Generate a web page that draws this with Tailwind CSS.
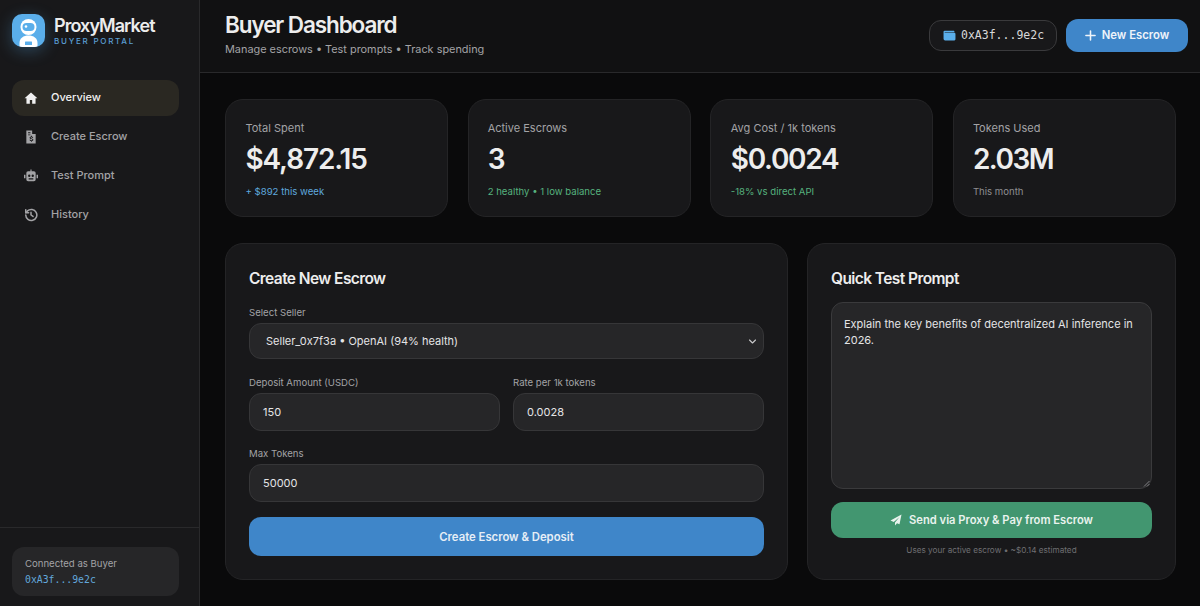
<!DOCTYPE html>
<html lang="en">
<head>
  <meta charset="UTF-8" />
  <title>ProxyMarket Buyer Dashboard</title>
  <script src="https://cdn.jsdelivr.net/npm/@tailwindcss/browser@4"></script>
</head>
<body class="bg-[#0a0a0b] text-[#f0f0f0] font-['Inter',sans-serif] overflow-hidden">
<div class="flex h-[606px] w-[1200px]">
  <!-- Sidebar -->
  <aside class="w-[200px] shrink-0 bg-[#18181a] border-r border-[#29292b] flex flex-col">
    <div class="flex gap-[9px] pl-[12px] pt-[14px] h-[80px]">
      <div class="w-[33px] h-[33px] rounded-[10px] bg-[#5aaeea] shadow-[0_4px_16px_rgba(90,174,234,0.3)] flex items-end justify-center shrink-0 overflow-hidden">
        <svg width="25" height="29" viewBox="0 0 25 29">
          <circle cx="12.5" cy="9" r="8" fill="#fff"/>
          <rect x="6.500" y="5" width="12" height="8" rx="4" fill="#5aaeea"/>
          <circle cx="10" cy="8.500" r="1.300" fill="#fff"/>
          <path d="M3.500 29v-4c0-5 4-7.500 9-7.500s9 2.500 9 7.500v4z" fill="#fff"/>
          <rect x="9" y="23.500" width="7" height="3.500" rx="0.500" fill="#5aaeea"/>
        </svg>
      </div>
      <div class="pt-[1px]">
        <div class="text-[18px] leading-[21px] font-semibold tracking-[-0.95px] text-[#ececec]">ProxyMarket</div>
        <div class="mt-[1px] text-[8px] leading-[9px] font-medium tracking-[1.75px] text-[#5b9fd4]">BUYER PORTAL</div>
      </div>
    </div>
    <nav class="pl-[12px] pr-[20px] flex flex-col gap-[3px] text-[11px] font-medium text-[#a3a3a6]">
      <a class="flex items-center gap-[13px] h-[36px] px-[12px] rounded-[12px] bg-[#2a2822] text-[#f0f0f0] pb-[1px]">
        <svg class="w-[14px] h-[14px]" viewBox="0 0 24 24" fill="currentColor"><path d="M12 2.500 1 12.500h3.200V22h5.800v-6.500h4V22h5.800v-9.500H23z"/></svg>
        Overview
      </a>
      <a class="flex items-center gap-[13px] h-[36px] px-[12px] rounded-[12px] pb-[1px]">
        <svg class="w-[14px] h-[14px]" viewBox="0 0 24 24" fill="currentColor"><path fill-rule="evenodd" d="M4 1h10l6 6v16H4zM14 1v6h6zM7 4h4v1.500H7zM7 7.500h4V9H7zM12 10h1.500v1.200c1.300.2 2.200.9 2.400 2l-1.500.3c-.1-.6-.7-.9-1.600-.9-1 0-1.500.3-1.500.8s.5.700 1.700 1c1.800.4 3 1 3 2.400 0 1.200-1 2-2.500 2.200V20H12v-1.100c-1.400-.2-2.400-1-2.600-2.200l1.500-.3c.2.700.8 1.100 1.800 1.100s1.600-.3 1.600-.9c0-.5-.5-.8-1.800-1.100-1.700-.4-2.900-1-2.900-2.300 0-1.100.9-1.900 2.400-2.100z"/></svg>
        Create Escrow
      </a>
      <a class="flex items-center gap-[13px] h-[36px] px-[12px] rounded-[12px] pb-[1px]">
        <svg class="w-[14px] h-[14px]" viewBox="0 0 24 24" fill="currentColor"><path fill-rule="evenodd" d="M11 1h2v3h4a3 3 0 0 1 3 3v11a3 3 0 0 1-3 3H7a3 3 0 0 1-3-3V7a3 3 0 0 1 3-3h4zM9 9.500a2 2 0 1 0 0 4 2 2 0 0 0 0-4zm6 0a2 2 0 1 0 0 4 2 2 0 0 0 0-4zM8 16v2h8v-2zM0 10h2.500v6H0zM21.500 10H24v6h-2.500z"/></svg>
        Test Prompt
      </a>
      <a class="flex items-center gap-[13px] h-[36px] px-[12px] rounded-[12px] pb-[1px]">
        <svg class="w-[14px] h-[14px]" viewBox="0 0 24 24" fill="none" stroke="currentColor" stroke-width="2.600" stroke-linecap="round" stroke-linejoin="round"><path d="M3 12a9.500 9.500 0 1 0 3-7L3 8"/><path d="M3 3v5h5"/><path d="M12 7.500V12l3.500 2.500"/></svg>
        History
      </a>
    </nav>
    <div class="mt-auto border-t border-[#29292b] pl-[12px] pr-[20px] pt-[19px] pb-[10px]">
      <div class="h-[49px] rounded-[12px] bg-[#262628] px-[13px] pt-[10px]">
        <div class="text-[9.600px] leading-[13px] text-[#a3a3a6]">Connected as Buyer</div>
        <div class="mt-[3px] text-[9.800px] leading-[13px] font-['DejaVu_Sans_Mono',monospace] text-[#62a8dc]">0xA3f...9e2c</div>
      </div>
    </div>
  </aside>

  <main class="flex-1 min-w-0 flex flex-col">
    <!-- Header -->
    <header class="h-[73px] shrink-0 bg-[#111112] border-b border-[#29292b] pl-[25px] pr-[12px] flex items-center justify-between">
      <div class="-mt-[4px]">
        <h1 class="text-[22.500px] leading-[28px] font-semibold tracking-[-1.1px] text-[#ededed]">Buyer Dashboard</h1>
        <p class="text-[10.900px] leading-[16px] text-[#a3a3a6] mt-[2px]">Manage escrows • Test prompts • Track spending</p>
      </div>
      <div class="flex items-center gap-[9px] -mt-[1px]">
        <div class="h-[31px] w-[128px] rounded-[12px] bg-[#18181a] border border-[#3a3a3c] flex items-center gap-[5px] pl-[13px]">
          <svg class="w-[13px] h-[13px]" viewBox="0 0 24 24" fill="#5aaeea"><path d="M3 3h17a1 1 0 0 1 1 1v2H3.500a.500.500 0 0 0 0 1H21a2 2 0 0 1 2 2v10a2 2 0 0 1-2 2H4a3 3 0 0 1-3-3V5a2 2 0 0 1 2-2z"/></svg>
          <span class="text-[11.500px] font-['DejaVu_Sans_Mono',monospace] text-[#d8d8da]">0xA3f...9e2c</span>
        </div>
        <button class="h-[33px] w-[122px] rounded-[12px] bg-[#3f86c9] text-[#eef4fa] text-[11.300px] font-semibold flex items-center justify-center gap-[6px]">
          <svg class="w-[11px] h-[11px]" viewBox="0 0 24 24" fill="none" stroke="currentColor" stroke-width="3.400" stroke-linecap="round"><path d="M12 2v20M2 12h20"/></svg>
          New Escrow
        </button>
      </div>
    </header>

    <div class="flex-1 pl-[25px] pr-[24px] pt-[26px] flex flex-col gap-[26px]">
      <!-- Stat cards -->
      <section class="grid grid-cols-4 gap-[19.500px]">
        <div class="h-[118px] rounded-[18px] bg-[#18181a] border border-[#242426] pl-[19.500px] pt-[19.500px]">
          <div class="text-[11px] leading-[16px] text-[#a3a3a6]">Total Spent</div>
          <div class="mt-[6.500px] text-[28px] leading-[34px] font-semibold tracking-[-1.150px] text-[#ededed]">$4,872.15</div>
          <div class="mt-[8.500px] text-[9.600px] leading-[14px] text-[#5fa8de]">+ $892 this week</div>
        </div>
        <div class="h-[118px] rounded-[18px] bg-[#18181a] border border-[#242426] pl-[19px] pt-[19.500px]">
          <div class="text-[11px] leading-[16px] text-[#a3a3a6]">Active Escrows</div>
          <div class="mt-[6.500px] text-[28px] leading-[34px] font-semibold tracking-[-1.150px] text-[#ededed]">3</div>
          <div class="mt-[8.500px] text-[9.600px] leading-[14px] text-[#56b27e]">2 healthy • 1 low balance</div>
        </div>
        <div class="h-[118px] rounded-[18px] bg-[#18181a] border border-[#242426] pl-[19.500px] pt-[19.500px]">
          <div class="text-[11px] leading-[16px] text-[#a3a3a6]">Avg Cost / 1k tokens</div>
          <div class="mt-[6.500px] text-[28px] leading-[34px] font-semibold tracking-[-1.300px] text-[#ededed]">$0.0024</div>
          <div class="mt-[8.500px] text-[9.600px] leading-[14px] text-[#56b27e]">-18% vs direct API</div>
        </div>
        <div class="h-[118px] rounded-[18px] bg-[#18181a] border border-[#242426] pl-[19px] pt-[19.500px]">
          <div class="text-[11px] leading-[16px] text-[#a3a3a6]">Tokens Used</div>
          <div class="mt-[6.500px] text-[28px] leading-[34px] font-semibold tracking-[-1.500px] text-[#ededed]">2.03M</div>
          <div class="mt-[8.500px] text-[9.600px] leading-[14px] text-[#8e8e91]">This month</div>
        </div>
      </section>

      <section class="flex gap-[19px]">
        <!-- Create escrow -->
        <div class="w-[563px] h-[337px] rounded-[18px] bg-[#18181a] border border-[#242426] px-[23px] pt-[24px]">
          <h2 class="text-[15.500px] leading-[22px] font-semibold tracking-[-0.580px] text-[#ededed]">Create New Escrow</h2>
          <label class="block mt-[16px] text-[9.600px] leading-[14px] text-[#a3a3a6]">Select Seller</label>
          <div class="mt-[3px] h-[36px] rounded-[12px] bg-[#262628] border border-[#363638] flex items-center justify-between pl-[16px] pr-[6px] text-[11px] text-[#e4e4e6]">
            <span>Seller_0x7f3a • OpenAI (94% health)</span>
            <svg class="w-[9px] h-[9px]" viewBox="0 0 12 12" fill="none" stroke="#c8c8ca" stroke-width="1.500" stroke-linecap="round" stroke-linejoin="round"><path d="M2 4l4 4 4-4"/></svg>
          </div>
          <div class="grid grid-cols-2 gap-[13px] mt-[17px]">
            <div>
              <label class="block text-[9.600px] leading-[14px] text-[#a3a3a6]">Deposit Amount (USDC)</label>
              <div class="mt-[3px] h-[38px] rounded-[12px] bg-[#262628] border border-[#363638] flex items-center px-[13px] text-[11px] text-[#e4e4e6]">150</div>
            </div>
            <div>
              <label class="block text-[9.600px] leading-[14px] text-[#a3a3a6]">Rate per 1k tokens</label>
              <div class="mt-[3px] h-[38px] rounded-[12px] bg-[#262628] border border-[#363638] flex items-center px-[13px] text-[11px] text-[#e4e4e6]">0.0028</div>
            </div>
          </div>
          <label class="block mt-[16px] text-[9.600px] leading-[14px] text-[#a3a3a6]">Max Tokens</label>
          <div class="mt-[3px] h-[38px] rounded-[12px] bg-[#262628] border border-[#363638] flex items-center px-[13px] text-[11px] text-[#e4e4e6]">50000</div>
          <button class="mt-[15px] w-full h-[39px] rounded-[12px] bg-[#3f86c9] text-[#e6eef6] text-[11.300px] font-semibold pt-[1px]">Create Escrow &amp; Deposit</button>
        </div>

        <!-- Quick test -->
        <div class="w-[369px] h-[337px] rounded-[18px] bg-[#18181a] border border-[#242426] px-[23px] pt-[24px]">
          <h2 class="text-[15.500px] leading-[22px] font-semibold tracking-[-0.580px] text-[#ededed]">Quick Test Prompt</h2>
          <div class="relative mt-[12px] h-[187px] rounded-[12px] bg-[#262628] border border-[#3a3a3c] pl-[12px] pr-[13px] pt-[13px] text-[11px] leading-[16px] text-[#e4e4e6]">
            Explain the key benefits of decentralized AI inference in 2026.
            <svg class="absolute right-[1px] bottom-[1px] w-[7px] h-[7px]" viewBox="0 0 7 7" stroke="#9a9a9c" stroke-width="0.800"><path d="M1 6.500 6.500 1M4 6.500 6.500 4"/></svg>
          </div>
          <button class="mt-[13px] w-full h-[36px] rounded-[12px] bg-[#429670] text-[#eaf3ee] text-[11.200px] font-semibold flex items-center justify-center gap-[7px]">
            <svg class="w-[12px] h-[12px]" viewBox="0 0 24 24" fill="currentColor"><path d="M23 1 1 13l6.500 2.800L19 6 10 17v6l4-4.500 5 2.200z"/></svg>
            Send via Proxy &amp; Pay from Escrow
          </button>
          <p class="mt-[6px] text-center text-[8.200px] leading-[12px] text-[#6f6f72]">Uses your active escrow • ~$0.14 estimated</p>
        </div>
      </section>
    </div>
  </main>
</div>
</body>
</html>
